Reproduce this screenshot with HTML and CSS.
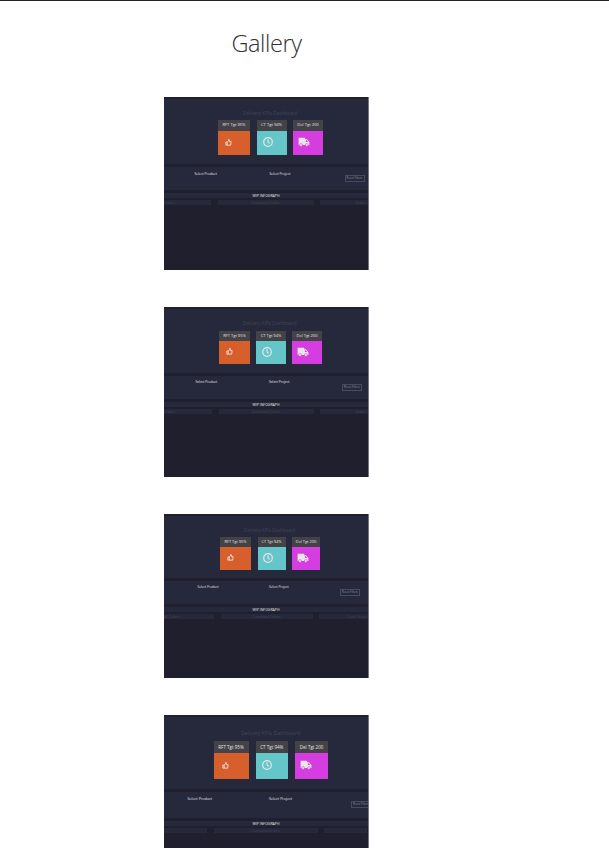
FILE: index.html
```html
<!DOCTYPE html>
<html lang="en">
<head>
<meta charset="utf-8">
<title>Gallery</title>
<link rel="stylesheet" href="styles.css">
</head>
<body>
<svg class="symbols" aria-hidden="true">
  <symbol id="thumb" viewBox="0 0 16 16"><path d="M2 7h3v7H2zM5 7l3-3V1.5h2V6h4l-1 8H5" fill="none" stroke="currentColor" stroke-width="2" stroke-linejoin="round"/></symbol>
  <symbol id="clock" viewBox="0 0 16 16"><circle cx="8" cy="8" r="6.9" fill="none" stroke="currentColor" stroke-width="1.9"/><path d="M8 3.6V8l2.8 2.2" fill="none" stroke="currentColor" stroke-width="1.7"/></symbol>
  <symbol id="truck" viewBox="0 0 20 16"><path d="M1 1h11v2.5h3L19 8v5H1z" fill="currentColor"/><path d="M13.2 5h1.3l2.5 3h-3.8z" fill="#d63de0"/><circle cx="5" cy="13" r="2.4" fill="currentColor" stroke="#d63de0" stroke-width=".9"/><circle cx="14.7" cy="13" r="2.4" fill="currentColor" stroke="#d63de0" stroke-width=".9"/></symbol>
</svg>
<main class="page">
  <h1>Gallery</h1>
  <div class="gallery">
    <article class="shot shot-1">
      <section class="hero">
        <p class="title">Delivery KPIs Dashboard</p>
        <div class="cards">
          <div class="card orange"><b>RFT Tgt 95%</b><span><svg class="thumb"><use href="#thumb"/></svg></span></div>
          <div class="card teal"><b>CT Tgt 94%</b><span><svg class="clock"><use href="#clock"/></svg></span></div>
          <div class="card pink"><b>Del Tgt 200</b><span><svg class="truck"><use href="#truck"/></svg></span></div>
        </div>
      </section>
      <section class="filters"><span class="product">Select Product</span><span class="project">Select Project</span><span class="reset">Reset Filters</span></section>
      <section class="info">WIP INFOGRAPH</section>
      <nav class="tabs"><span>Orders</span><span>Completed Orders</span><span>Orders</span></nav>
    </article>
    <article class="shot shot-2">
      <section class="hero">
        <p class="title">Delivery KPIs Dashboard</p>
        <div class="cards">
          <div class="card orange"><b>RFT Tgt 95%</b><span><svg class="thumb"><use href="#thumb"/></svg></span></div>
          <div class="card teal"><b>CT Tgt 94%</b><span><svg class="clock"><use href="#clock"/></svg></span></div>
          <div class="card pink"><b>Del Tgt 200</b><span><svg class="truck"><use href="#truck"/></svg></span></div>
        </div>
      </section>
      <section class="filters"><span class="product">Select Product</span><span class="project">Select Project</span><span class="reset">Reset Filters</span></section>
      <section class="info">WIP INFOGRAPH</section>
      <nav class="tabs"><span>Orders</span><span>Completed Orders</span><span>Orders</span></nav>
    </article>
    <article class="shot shot-3">
      <section class="hero">
        <p class="title">Delivery KPIs Dashboard</p>
        <div class="cards">
          <div class="card orange"><b>RFT Tgt 95%</b><span><svg class="thumb"><use href="#thumb"/></svg></span></div>
          <div class="card teal"><b>CT Tgt 94%</b><span><svg class="clock"><use href="#clock"/></svg></span></div>
          <div class="card pink"><b>Del Tgt 200</b><span><svg class="truck"><use href="#truck"/></svg></span></div>
        </div>
      </section>
      <section class="filters"><span class="product">Select Product</span><span class="project">Select Project</span><span class="reset">Reset Filters</span></section>
      <section class="info">WIP INFOGRAPH</section>
      <nav class="tabs"><span>All Orders</span><span>Completed Orders</span><span>Order Status</span></nav>
    </article>
    <article class="shot shot-4">
      <section class="hero">
        <p class="title">Delivery KPIs Dashboard</p>
        <div class="cards">
          <div class="card orange"><b>RFT Tgt 95%</b><span><svg class="thumb"><use href="#thumb"/></svg></span></div>
          <div class="card teal"><b>CT Tgt 94%</b><span><svg class="clock"><use href="#clock"/></svg></span></div>
          <div class="card pink"><b>Del Tgt 200</b><span><svg class="truck"><use href="#truck"/></svg></span></div>
        </div>
      </section>
      <section class="filters"><span class="product">Select Product</span><span class="project">Select Project</span><span class="reset">Reset Filters</span></section>
      <section class="info">WIP INFOGRAPH</section>
      <nav class="tabs"><span></span><span>Completed Orders</span><span></span></nav>
    </article>
  </div>
</main>
</body>
</html>
```
FILE: styles.css
```css
* { box-sizing: border-box; }
body {
  margin: 0;
  height: 848px;
  background: #fff;
  border-top: 1px solid #242426;
  font-family: "Open Sans", "Noto Sans", sans-serif;
}
.symbols { position: absolute; width: 0; height: 0; }
.page { width: 533px; }
h1 {
  margin: 0;
  height: 96px;
  padding-top: 25px;
  text-align: center;
  font-size: 23.5px;
  line-height: 34px;
  font-weight: 300;
  letter-spacing: -0.4px;
  color: #303034;
}
.gallery { width: 205px; margin-left: 164px; }

.shot {
  height: var(--height);
  margin-bottom: var(--after);
  padding-top: 2px;
  overflow: hidden;
  background: #201f2d;
  border-right: 1px solid #777582;
  color: #e6e5ea;
  font-size: var(--font);
  line-height: 1;
  white-space: nowrap;
}
.hero {
  height: var(--hero);
  background: #26293c;
  padding-top: var(--title-top);
}
.title {
  margin: 0 0 0 79px;
  height: var(--title-height);
  font-size: var(--title-font);
  color: #414455;
}
.cards {
  display: grid;
  grid-template-columns: var(--cards);
  column-gap: var(--card-gap);
  margin-left: var(--cards-left);
}
.card { height: var(--card); display: flex; flex-direction: column; }
.card b {
  height: var(--card-head);
  display: flex;
  align-items: center;
  justify-content: center;
  background: #424247;
  font-weight: 400;
}
.card span { flex: 1; display: flex; align-items: center; padding-bottom: 2px; }
.card svg { color: #e9e5e8; }
.orange { background: #d75f2c; }
.teal { background: #65c6ca; }
.pink { background: #d63de0; }
.thumb { width: 7px; height: 7px; margin-left: var(--thumb-left); }
.clock { width: 10px; height: 10px; margin-left: var(--clock-left); }
.truck { width: 12px; height: 10px; margin-left: 5px; }

.filters {
  height: var(--filters);
  margin-top: 3px;
  padding-top: 4.5px;
  display: grid;
  grid-template-columns: var(--filter-columns);
  align-items: start;
  background: #26293c;
  font-size: var(--label-font);
}
.product { grid-column: 2; }
.project { grid-column: 3; }
.reset {
  grid-column: 4;
  width: 20px;
  height: 7px;
  margin-top: var(--reset-top);
  display: flex;
  align-items: center;
  justify-content: center;
  border: 1px solid #484a5d;
  font-size: 2.8px;
  color: #92939f;
}
.info {
  height: 5px;
  margin-top: 3px;
  display: flex;
  align-items: center;
  justify-content: center;
  background: #26293c;
  font-size: 3.5px;
}
.tabs {
  height: 5px;
  margin-top: 2px;
  display: grid;
  grid-template-columns: var(--tabs);
  column-gap: 6.5px;
  font-size: 3.3px;
  color: #434557;
}
.tabs span { display: flex; align-items: center; justify-content: center; background: #26293c; }
.tabs span:first-child { justify-content: flex-start; }
.tabs span:last-child { justify-content: flex-end; padding-right: 2px; }

.shot-1 {
  --height: 173px; --after: 37px;
  --font: 4.1px; --title-font: 4.8px; --label-font: 3.35px;
  --hero: 65px; --title-top: 12px; --title-height: 9px;
  --cards: 32px 30px 30px; --card-gap: 6.5px; --cards-left: 54px;
  --card: 35px; --card-head: 11px; --thumb-left: 7px; --clock-left: 6px;
  --filters: 23px; --filter-columns: 30.5px 75px 75px 20px; --reset-top: 3px;
  --tabs: 47px 96px 48px;
}
.shot-2 {
  --height: 170px; --after: 37px;
  --font: 4px; --title-font: 4.7px; --label-font: 3.25px;
  --hero: 64px; --title-top: 12px; --title-height: 10px;
  --cards: 31px 30px 30px; --card-gap: 6px; --cards-left: 55px;
  --card: 33px; --card-head: 10px; --thumb-left: 7px; --clock-left: 6px;
  --filters: 23px; --filter-columns: 31.5px 73.5px 73px 20px; --reset-top: 3px;
  --tabs: 48px 95px 48px;
}
.shot-3 {
  --height: 164px; --after: 37px;
  --font: 3.9px; --title-font: 4.5px; --label-font: 3.15px;
  --hero: 62px; --title-top: 12px; --title-height: 9px;
  --cards: 31px 28px 28px; --card-gap: 6.5px; --cards-left: 56px;
  --card: 33px; --card-head: 10px; --thumb-left: 7px; --clock-left: 5px;
  --filters: 23px; --filter-columns: 33.5px 71.5px 71px 20px; --reset-top: 3px;
  --tabs: 50px 92px 50px;
}
.shot-3 .title { margin-left: 80px; }
.shot-4 {
  --height: 132px; --after: 0;
  --font: 4.5px; --title-font: 5.2px; --label-font: 3.7px;
  --hero: 72px; --title-top: 14px; --title-height: 10px;
  --cards: 35px 32px 33px; --card-gap: 7.3px; --cards-left: 49.5px;
  --card: 38px; --card-head: 12px; --thumb-left: 8px; --clock-left: 6px;
  --filters: 26px; --filter-columns: 23.5px 81.5px 82px 20px; --reset-top: 4px;
  --tabs: 43px 104px 43px;
}
.shot-4 { height: 133px; }
.shot-4 .title { margin-left: 77px; }
```
